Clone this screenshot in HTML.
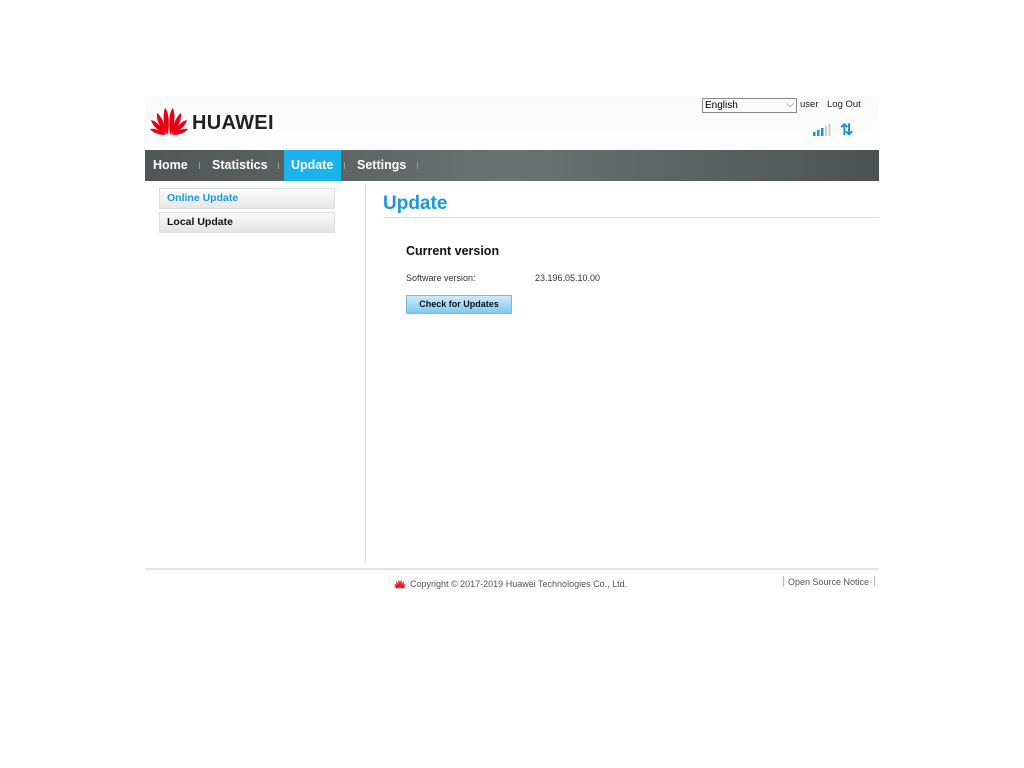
<!DOCTYPE html>
<html><head><meta charset="utf-8"><style>
body{margin:0;background:#fff;font-family:"Liberation Sans",Arial,sans-serif;}
.abs{position:absolute}
</style></head><body>
<div class="abs" style="left:145px;top:97px;width:734px;height:53px;background:linear-gradient(#fafafa,#fff)"></div>
<svg class="abs" style="left:148px;top:105px" width="42" height="32" viewBox="0 0 42 32">
<g fill="#e60012">
<path d="M20 30 C16 22 14 12 17 3 C20 6 22 14 20 30Z"/>
<path d="M22 30 C26 22 28 12 25 3 C22 6 20 14 22 30Z"/>
<path d="M19 30 C13 24 8 16 9 8 C13 11 17 18 19 30Z"/>
<path d="M23 30 C29 24 34 16 33 8 C29 11 25 18 23 30Z"/>
<path d="M18 30 C12 27 5 22 3 15 C8 16 14 22 18 30Z"/>
<path d="M24 30 C30 27 37 22 39 15 C34 16 28 22 24 30Z"/>
<path d="M17 30 C11 30 5 28 2 24 C7 23 13 26 17 30Z"/>
<path d="M25 30 C31 30 37 28 40 24 C35 23 29 26 25 30Z"/>
</g></svg>
<div class="abs" style="left:192px;top:112px;font-size:20px;font-weight:bold;color:#222;letter-spacing:0.3px">HUAWEI</div>
<div class="abs" style="left:702px;top:98px;width:91px;height:13px;border:1px solid #888;font-size:10px;line-height:13px;padding-left:2px;box-sizing:content-box">English<span style="position:absolute;right:2px;top:-1px;color:#666">⌵</span></div>
<div class="abs" style="left:800px;top:99px;font-size:9.5px;color:#222">user</div>
<div class="abs" style="left:827px;top:99px;font-size:9.5px;color:#222">Log Out</div>
<svg class="abs" style="left:812px;top:123px" width="20" height="14"><rect x="1" y="9" width="2.5" height="4" fill="#1a94d4"/><rect x="5" y="7" width="2.5" height="6" fill="#1a94d4"/><rect x="9" y="5" width="2.5" height="8" fill="#1a94d4"/><rect x="13" y="3" width="2" height="10" fill="#ccc"/><rect x="16.5" y="1" width="2" height="12" fill="#ccc"/></svg>
<div class="abs" style="left:840px;top:120px;font-size:16px;color:#1a94d4;font-weight:bold;letter-spacing:-2px">⇅</div>
<div class="abs" style="left:145px;top:150px;width:734px;height:31px;background:linear-gradient(90deg,#505656,#6a7272 50%,#4c5252)"></div>
<div class="abs" style="left:284px;top:150px;width:57px;height:31px;background:#1cb2ec"></div>
<div class="abs" style="top:158px;left:153px;font-size:12.5px;font-weight:bold;color:#fff">Home</div>
<div class="abs" style="top:158px;left:212px;font-size:12.5px;font-weight:bold;color:#fff">Statistics</div>
<div class="abs" style="top:158px;left:291px;font-size:12.5px;font-weight:bold;color:#fff">Update</div>
<div class="abs" style="top:158px;left:357px;font-size:12.5px;font-weight:bold;color:#fff">Settings</div>
<div class="abs" style="top:162px;left:199px;width:1px;height:7px;background:#999"></div>
<div class="abs" style="top:162px;left:278px;width:1px;height:7px;background:#999"></div>
<div class="abs" style="top:162px;left:344px;width:1px;height:7px;background:#999"></div>
<div class="abs" style="top:162px;left:417px;width:1px;height:7px;background:#999"></div>
<div class="abs" style="left:159px;top:188px;width:167px;height:19px;border:1px solid #ddd;background:linear-gradient(#fafafa,#e8e8e8);font-size:10.5px;font-weight:bold;color:#1a9ad6;line-height:19px;padding-left:7px">Online Update</div>
<div class="abs" style="left:159px;top:212px;width:167px;height:19px;border:1px solid #ddd;background:linear-gradient(#fafafa,#e4e4e4);font-size:10.5px;font-weight:bold;color:#111;line-height:19px;padding-left:7px">Local Update</div>
<div class="abs" style="left:365px;top:183px;width:1px;height:380px;background:#ddd"></div>
<div class="abs" style="left:383px;top:193px;font-size:19px;font-weight:bold;color:#1a9ad6">Update</div>
<div class="abs" style="left:383px;top:217px;width:496px;height:1px;background:#e2e2e2"></div>
<div class="abs" style="left:406px;top:244px;font-size:12.5px;font-weight:bold;color:#111">Current version</div>
<div class="abs" style="left:406px;top:273px;font-size:9px;color:#333">Software version:</div>
<div class="abs" style="left:535px;top:273px;font-size:9px;color:#333">23.196.05.10.00</div>
<div class="abs" style="left:406px;top:295px;width:104px;height:17px;border:1px solid #7ab8dd;background:linear-gradient(#cdeafb,#7ccbf2);font-size:9px;font-weight:bold;color:#111;text-align:center;line-height:17px">Check for Updates</div>
<div class="abs" style="left:145px;top:568px;width:734px;height:2px;background:#e4e4e4"></div>
<svg class="abs" style="left:393px;top:579px" width="14" height="10" viewBox="0 0 42 32"><g fill="#e60012"><path d="M20 30 C16 22 14 12 17 3 C20 6 22 14 20 30Z"/><path d="M22 30 C26 22 28 12 25 3 C22 6 20 14 22 30Z"/><path d="M19 30 C13 24 8 16 9 8 C13 11 17 18 19 30Z"/><path d="M23 30 C29 24 34 16 33 8 C29 11 25 18 23 30Z"/><path d="M18 30 C12 27 5 22 3 15 C8 16 14 22 18 30Z"/><path d="M24 30 C30 27 37 22 39 15 C34 16 28 22 24 30Z"/><path d="M17 30 C11 30 5 28 2 24 C7 23 13 26 17 30Z"/><path d="M25 30 C31 30 37 28 40 24 C35 23 29 26 25 30Z"/></g></svg>
<div class="abs" style="left:410px;top:579px;font-size:9px;color:#555">Copyright © 2017-2019 Huawei Technologies Co., Ltd.</div>
<div class="abs" style="left:783px;top:576px;width:1px;height:11px;background:#bbb"></div>
<div class="abs" style="left:788px;top:577px;font-size:9px;color:#555">Open Source Notice</div>
<div class="abs" style="left:874px;top:576px;width:1px;height:11px;background:#bbb"></div>
</body></html>
